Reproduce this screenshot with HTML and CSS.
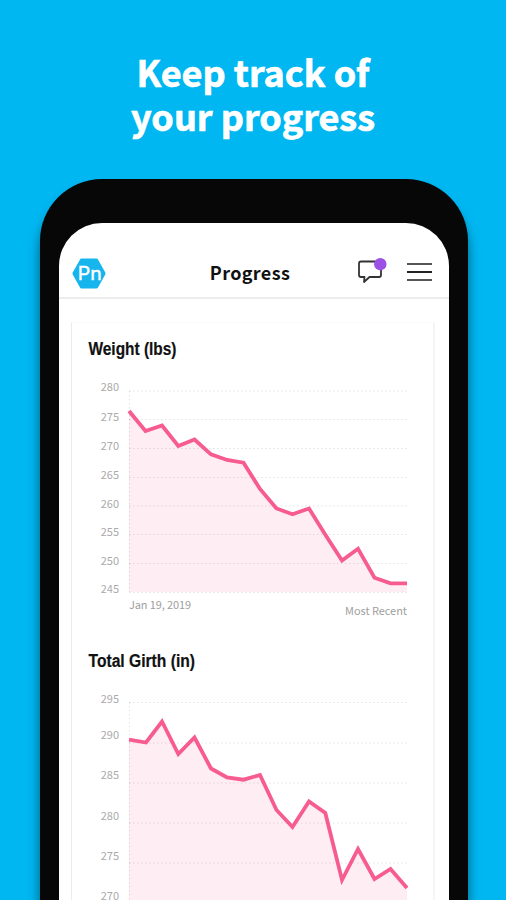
FILE: index.html
```html
<!DOCTYPE html>
<html lang="en">
<head>
  <meta charset="UTF-8" />
  <meta name="viewport" content="width=device-width, initial-scale=1.0" />
  <title>Progress</title>
  <link rel="stylesheet" href="styles.css">
</head>
<body>
  <h1 class="headline">Keep track of<br>your progress</h1>

  <div class="phone">
    <div class="screen">
      <header class="topbar">
        <svg class="logo" width="34" height="31" viewBox="0 0 34 31">
          <path class="logo-shape" d="M9.5 0.5h15q1 0 1.500.9l7.300 13.200q.5.9 0 1.800l-7.300 13.200q-.5.9-1.500.9H9.500q-1 0-1.500-.9l-7.300-13.200q-.5-.9 0-1.800L8 1.400q.5-.9 1.500-.9z" />
          <g class="logo-text">
            <text x="5.800" y="21.500" textLength="24" lengthAdjust="spacingAndGlyphs">Pn</text>
          </g>
        </svg>
        <h2 class="title">Progress</h2>
        <div class="actions">
          <svg class="chat" width="30" height="30" viewBox="0 0 30 30">
            <path d="M4 4.500h18q2 0 2 2v11.500q0 2-2 2H12.500l-5.500 5 .5-5H4q-2 0-2-2v-11.500q0-2 2-2z" />
            <circle cx="23.300" cy="7.200" r="6.200" />
          </svg>
          <div class="menu"><span></span><span></span><span></span></div>
        </div>
      </header>

      <main class="card">
        <section class="panel">
          <svg class="chart" width="362" height="312" viewBox="72 323 362 312">
            <text class="name" x="88.500" y="355" textLength="88" lengthAdjust="spacingAndGlyphs">Weight (lbs)</text>
            <path class="area" d="M129 412L145.500 431 162 425.500 178.300 446 194.500 439.500 211 454.300 227 460 243.500 462.700 260 489 276.500 508.500 292.500 514.300 309 508.500 325.500 535 342 560.500 358 548.700 374.500 577.700 390.500 583.300 407 583.300V592H129z" />
            <path class="grid" d="M129 391H407M129 419.500H407M129 448.500H407M129 477.500H407M129 506H407M129 534.500H407M129 563.500H407M129 592.500H407M129.500 391V592" />
            <path class="line" d="M129 411L145.500 431 162 425.500 178.300 446 194.500 439.500 211 454.300 227 460 243.500 462.700 260 489 276.500 508.500 292.500 514.300 309 508.500 325.500 535 342 560.500 358 548.700 374.500 577.700 390.500 583.300 407 583.300" />
            <g class="ticks">
              <text x="119" y="391">280</text>
              <text x="119" y="420.500">275</text>
              <text x="119" y="450">270</text>
              <text x="119" y="478.500">265</text>
              <text x="119" y="507.500">260</text>
              <text x="119" y="536">255</text>
              <text x="119" y="564.500">250</text>
              <text x="119" y="593">245</text>
            </g>
            <text class="date" x="129" y="609" textLength="62">Jan 19, 2019</text>
            <text class="date" x="345" y="615" textLength="62">Most Recent</text>
          </svg>
        </section>

        <section class="panel">
          <svg class="chart" width="362" height="265" viewBox="72 635 362 265">
            <text class="name" x="88.500" y="666.500" textLength="106.500" lengthAdjust="spacingAndGlyphs">Total Girth (in)</text>
            <path class="area" d="M129 739.700L146 742.500 162 721.500 178.300 754 194.500 737.500 211 768.500 227 777.500 243.500 779.700 260 775 276.500 810 292.500 827 309 801.500 325.300 813 342 880 358 849 374.500 879 390.500 869 407 888V900H129z" />
            <path class="grid" d="M129 702.500H407M129 743H407M129 783H407M129 823H407M129 863H407M129.500 702V900" />
            <path class="line" d="M129 739.700L146 742.500 162 721.500 178.300 754 194.500 737.500 211 768.500 227 777.500 243.500 779.700 260 775 276.500 810 292.500 827 309 801.500 325.300 813 342 880 358 849 374.500 879 390.500 869 407 888" />
            <g class="ticks">
              <text x="119" y="703">295</text>
              <text x="119" y="739">290</text>
              <text x="119" y="779">285</text>
              <text x="119" y="819.500">280</text>
              <text x="119" y="860">275</text>
              <text x="119" y="899.500">270</text>
            </g>
          </svg>
        </section>
      </main>
    </div>
  </div>
</body>
</html>
```
FILE: styles.css
```css
body {
  margin: 0;
  height: 900px;
  overflow: hidden;
  background-color: #00b7f1;
  font-family: "Noto Sans CJK JP", "Noto Sans", sans-serif;
}

.headline {
  margin: 0;
  padding-top: 49px;
  height: 130px;
  color: #fff;
  font-size: 36px;
  line-height: 44px;
  font-weight: 700;
  text-align: center;
  -webkit-text-stroke: 0.7px #fff;
}

.phone {
  box-sizing: border-box;
  width: 427.5px;
  height: 721px;
  margin-left: 40px;
  padding: 44px 18.5px 0 19px;
  background-color: #070707;
  border-radius: 62px 62px 0 0;
  box-shadow: 0 12px 12px rgba(0, 0, 0, 0.5);
}

.screen {
  height: 677px;
  background-color: #fff;
  border-radius: 43px 43px 0 0;
  overflow: hidden;
}

.topbar {
  box-sizing: border-box;
  height: 76px;
  padding: 23px 17px 0 13px;
  display: grid;
  grid-template-columns: 100px 1fr 100px;
  align-items: center;
  border-bottom: 2px solid #ececec;
}

.logo {
  margin-top: 3px;
}

.logo-shape {
  fill: #17b5ee;
}

.logo-text {
  fill: #fff;
  font-family: "Inter", sans-serif;
  font-size: 18px;
  stroke: #fff;
  stroke-width: 0.4;
}

.title {
  margin: 0;
  padding-right: 4px;
  color: #111;
  font-size: 18px;
  line-height: 30px;
  letter-spacing: 0.35px;
  text-align: center;
}

.actions {
  display: flex;
  justify-content: flex-end;
  align-items: center;
  gap: 20px;
}

.chat path {
  fill: none;
  stroke: #333;
  stroke-width: 1.8;
  stroke-linejoin: round;
}

.chat circle {
  fill: #9b51e6;
}

.menu {
  width: 25px;
  display: flex;
  flex-direction: column;
  gap: 6px;
}

.menu span {
  height: 2px;
  background-color: #555;
}

.menu span:nth-child(2) {
  background-color: #222;
}

.card {
  width: 361px;
  height: 578px;
  margin: 23px 0 0 12px;
  border: 2px solid #f5f5f5;
  border-top: 1px solid #fafafa;
  border-bottom: none;
  border-left: 1px solid #ececec;
  overflow: hidden;
}

.chart {
  display: block;
}

.name {
  font-size: 18px;
  font-weight: 700;
  font-family: "Liberation Sans Narrow", "Liberation Sans", sans-serif;
  fill: #111;
  stroke: #111;
  stroke-width: 0.2;
}

.area {
  fill: #feeef4;
}

.line {
  fill: none;
  stroke: #f75c90;
  stroke-width: 3.8;
}

.grid {
  fill: none;
  stroke: #000;
  stroke-opacity: 0.11;
  stroke-dasharray: 1.5 2.5;
}

.ticks text {
  font-size: 11px;
  text-anchor: end;
  fill: #aaa;
}

.date {
  font-size: 11px;
  fill: #a0a0a0;
}
```
